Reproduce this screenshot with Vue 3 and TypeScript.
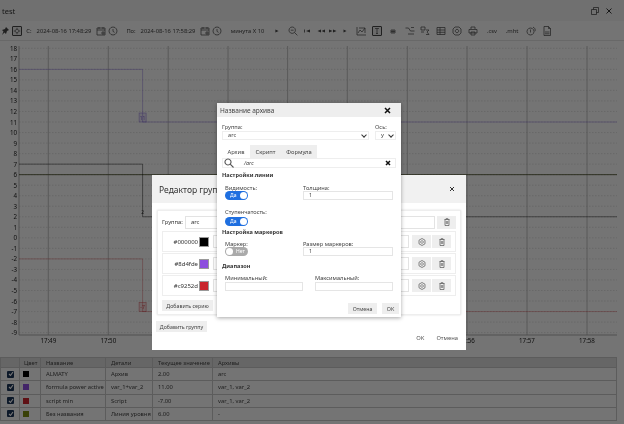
<script setup lang="ts">
interface Tool { w: number; text?: string; d?: string; fill?: boolean; boxed?: boolean }

const tools: Tool[] = [
  { w: 10, d: 'M6 1l3 3-2 1-1 3-1.500-1.500L2 9 3.500 5.500 2 4l3-1z', fill: true },
  { w: 14, d: 'M4 2.200a1.800 1.800 0 1 0 .01 0M4 .8v1M4 6.200v1M.8 4h1M6.200 4h1', boxed: true },
  { w: 10, text: 'С:' },
  { w: 60, text: '2024-08-16 17:48:29' },
  { w: 14, d: 'M1 2h8v7H1zM1 4h8M3 1v2M7 1v2M6 6h2v2H6z' },
  { w: 10, d: 'M5 1a4 4 0 1 0 .01 0M5 3v2.400l1.600 1' },
  { w: 6 },
  { w: 14, text: 'По:' },
  { w: 60, text: '2024-08-16 17:58:29' },
  { w: 14, d: 'M1 2h8v7H1zM1 4h8M3 1v2M7 1v2M6 6h2v2H6z' },
  { w: 10, d: 'M5 1a4 4 0 1 0 .01 0M5 3v2.400l1.600 1' },
  { w: 51, text: 'минута X 10' },
  { w: 8, d: 'M3 3l4 2-4 2z', fill: true },
  { w: 6 },
  { w: 12, d: 'M4.200 1a3.200 3.200 0 1 0 .01 0M6.600 6.600L9.400 9.400M2.800 4.200h2.800' },
  { w: 16, d: 'M2 3.500h.8v3H2zM8 3.500L4 5l4 1.500z', fill: true },
  { w: 12, d: 'M5 3.500L1.500 5 5 6.500zM9 3.500L5.500 5 9 6.500z', fill: true },
  { w: 12, d: 'M1 3.500L4.500 5 1 6.500zM5 3.500L8.500 5 5 6.500z', fill: true },
  { w: 12, d: 'M3.500 3.500L6.500 5l-3 1.500z', fill: true },
  { w: 20, d: 'M1 1v8h9M2 7l2-3 2 2 3-4M3 2h6v5' },
  { w: 12, d: 'M2 1.500h4M4 1.500v5M3 6.500h2', boxed: true },
  { w: 20, d: 'M3 4h4v3H3zM3 5.500h4M5 4v3' },
  { w: 14, d: 'M0.500 2h3l2 3h4M3 8h6M6 1.500h3' },
  { w: 16, d: 'M1 1h4v3H1zM6 4h3L7 6l2 2.500H6M1 6h3' },
  { w: 16, d: 'M1 1.500h8v7H1zM1 4h8M1 6.300h8M4 1.500v7' },
  { w: 16, d: 'M3 1h4l2 2v4L7 9H3L1 7V3zM5 3.300a1.700 1.700 0 1 0 .01 0' },
  { w: 16, d: 'M3 3V1h4v2M1 3.500h8v3.500H1zM3 6h4v3H3z' },
  { w: 22, text: '.csv' },
  { w: 18, text: '.mht' },
  { w: 20, d: 'M4.500 2a3.500 3.500 0 1 0 .01 0M7 1.200a3 3 0 0 1 2 4M4.500 3.500v3' },
  { w: 12, d: 'M2 .5h4.500L8.500 2.500v7H2zM6.500 .5v2h2M3 6h4.500M3 7.800h4.500' },
]

// chart geometry: value to pixel
const yOf = (v: number) => 48.3 + (18 - v) * 10.53
const values = Array.from({ length: 28 }, (_, i) => 18 - i)
const majors = [
  { x: 48.3, t: '17:49' }, { x: 108.3, t: '17:50' }, { x: 168.2, t: '17:51' }, { x: 228, t: '17:52' },
  { x: 287.6, t: '17:53' }, { x: 347.3, t: '17:54' }, { x: 407.3, t: '17:55' }, { x: 467, t: '17:56' },
  { x: 527, t: '17:57' }, { x: 587, t: '17:58' },
]
const stepX = 142.6
const series = [
  { color: '#6d4bd0', from: 16, to: 11, label: '11', box: true, alpha: 0.45 },
  { color: '#000000', from: 7, to: 2, label: '2', box: false, alpha: 0.55 },
  { color: '#c9252d', from: -2, to: -7, label: '-7', box: true, alpha: 0.4 },
]
const stepPath = (a: number, b: number) => `M19 ${yOf(a)}H${stepX}V${yOf(b)}H617`

const rows = [
  { color: '#000000', name: 'ALMATY', details: 'Архив', value: '2.00', archives: 'arc' },
  { color: '#8d4fde', name: 'formula power active', details: 'var_1+var_2', value: '11.00', archives: 'var_1, var_2' },
  { color: '#c9252d', name: 'script min', details: 'Script', value: '-7.00', archives: 'var_1, var_2' },
  { color: '#7a8a10', name: 'Без названия', details: 'Линия уровня', value: '6.00', archives: '-' },
]
const groupSeries = [
  { hex: '#000000', color: '#000000' },
  { hex: '#8d4fde', color: '#8d4fde' },
  { hex: '#c9252d', color: '#c9252d' },
]
</script>

<template>
  <div class="app">
    <header class="titlebar">
      <span>test</span>
      <span class="win-btns">
        <svg width="8" height="8" viewBox="0 0 8 8"><path d="M0.500 2.500h5v5h-5zM2.500 2.500v-2h5v5h-2" /></svg>
        <svg width="8" height="8" viewBox="0 0 8 8"><path d="M1.500 1.500l5 5M6.500 1.500l-5 5" class="thick" /></svg>
      </span>
    </header>

    <div class="toolbar">
      <span v-for="(tool, i) in tools" :key="i" class="tool" :style="{ width: tool.w + 'px' }">
        <template v-if="tool.text">{{ tool.text }}</template>
        <span v-else-if="tool.boxed" class="boxed">
          <svg width="8" height="8" viewBox="0 0 8 8"><path :d="tool.d" /></svg>
        </span>
        <svg v-else-if="tool.d" width="10" height="10" viewBox="0 0 10 10"><path :d="tool.d" :class="{ solid: tool.fill }" /></svg>
      </span>
    </div>

    <svg class="chart" width="624" height="316" viewBox="0 41 624 316">
      <line v-for="v in values" :key="v" x1="19" x2="617" :y1="yOf(v)" :y2="yOf(v)" class="minor" />
      <line v-for="m in majors" :key="m.t" :x1="m.x" :x2="m.x" y1="46" y2="335" class="major" />
      <line x1="19" x2="19" y1="46" y2="335" class="axis" />
      <line x1="19" x2="617" y1="335" y2="335" class="axis" />
      <text v-for="v in values" :key="'l' + v" x="17" :y="yOf(v) + 2.500" text-anchor="end" class="tick">{{ v }}</text>
      <text v-for="m in majors" :key="'t' + m.t" :x="m.x" y="342.500" text-anchor="middle" class="tick">{{ m.t }}</text>
      <line x1="19" x2="617" :y1="yOf(6)" :y2="yOf(6)" stroke="#3f4520" stroke-width=".8" />
      <g v-for="s in series" :key="s.color">
        <path :d="stepPath(s.from, s.to)" class="trace" :style="{ stroke: s.color, strokeOpacity: s.alpha }" />
        <rect v-if="s.box" :x="stepX - 3.500" :y="yOf(s.to) - 9" width="7" height="9" :fill="s.color" fill-opacity=".12" :stroke="s.color" stroke-width=".6" stroke-opacity=".6" />
        <text :x="stepX" :y="yOf(s.to) - 2.500" text-anchor="middle" class="mark" :fill="s.color">{{ s.label }}</text>
      </g>
    </svg>

    <table class="legend">
      <thead>
        <tr><th class="c0"></th><th class="c1">Цвет</th><th class="c2">Название</th><th class="c3">Детали</th><th class="c4">Текущее значение</th><th>Архивы</th></tr>
      </thead>
      <tbody>
        <tr v-for="r in rows" :key="r.name">
          <td><span class="check">
            <svg width="6" height="6" viewBox="0 0 6 6"><path d="M1 3l1.500 1.500L5 1" class="white" /></svg>
          </span></td>
          <td><span class="dot" :style="{ background: r.color }"></span></td>
          <td>{{ r.name }}</td><td>{{ r.details }}</td><td>{{ r.value }}</td><td>{{ r.archives }}</td>
        </tr>
      </tbody>
    </table>

    <div class="backdrop"></div>

    <section class="editor">
      <div class="ed-head">
        <span>Редактор групп</span>
        <svg width="6" height="6" viewBox="0 0 6 6"><path d="M1 1l4 4M5 1L1 5" class="thick" /></svg>
      </div>
      <div class="ed-body">
        <div class="group">
          <div class="group-row">
            <span class="ed-label">Группа:</span>
            <span class="ed-input">arc</span>
            <button class="sq">
              <svg width="8" height="8" viewBox="0 0 8 8"><path d="M1.500 1.500h5M3 1.500V.7h2v.8M2 1.500v6h4v-6M3.300 3v3M4.700 3v3" /></svg>
            </button>
          </div>
          <div v-for="g in groupSeries" :key="g.hex" class="series">
            <span class="hex">{{ g.hex }}</span>
            <span class="swatch" :style="{ background: g.color }"></span>
            <span class="ed-input grow"></span>
            <button class="sq">
              <svg width="8" height="8" viewBox="0 0 8 8"><path d="M4 .5l3 1.700v3.600L4 7.500 1 5.800V2.200zM4 2.700a1.300 1.300 0 1 0 .01 0" /></svg>
            </button>
            <button class="sq">
              <svg width="8" height="8" viewBox="0 0 8 8"><path d="M1.500 1.500h5M3 1.500V.7h2v.8M2 1.500v6h4v-6M3.300 3v3M4.700 3v3" /></svg>
            </button>
          </div>
          <button class="flat add-series">Добавить серию</button>
        </div>
        <button class="flat add-group">Добавить группу</button>
      </div>
      <div class="ed-foot"><span>OK</span><span>Отмена</span></div>
    </section>

    <section class="archive">
      <div class="ar-head">
        <span>Название архива</span>
        <svg width="7" height="7" viewBox="0 0 7 7"><path d="M1 1l5 5M6 1L1 6" class="bold" /></svg>
      </div>
      <div class="ar-body">
        <div class="pick-row">
          <label class="field wide">Группа:
            <span class="select">arc<i class="chev"></i></span>
          </label>
          <label class="field axis-pick">Ось:
            <span class="select">y<i class="chev"></i></span>
          </label>
        </div>
        <div class="tabs">
          <span class="tab active">Архив</span><span class="tab">Скрипт</span><span class="tab">Формула</span>
        </div>
        <div class="search">
          <svg width="10" height="10" viewBox="0 0 10 10"><path d="M4 1a3 3 0 1 0 .01 0M6.200 6.200L9.500 9.500" class="mag" /></svg>
          <span class="query">/arc</span>
          <svg width="6" height="6" viewBox="0 0 6 6"><path d="M1 1l4 4M5 1L1 5" class="bold" /></svg>
        </div>

        <h4 class="first">Настройки линии</h4>
        <div class="set-row visible">
          <label class="field left">Видимость:
            <span class="toggle on">Да</span>
          </label>
          <label class="field right">Толщина:
            <span class="box">1</span>
          </label>
        </div>
        <div class="set-row step">
          <label class="field left">Ступенчатость:
            <span class="toggle on">Да</span>
          </label>
        </div>

        <h4 class="second">Настройка маркеров</h4>
        <div class="set-row marker">
          <label class="field left">Маркер:
            <span class="toggle off">Нет</span>
          </label>
          <label class="field right">Размер маркеров:
            <span class="box">1</span>
          </label>
        </div>

        <h4 class="third">Диапазон</h4>
        <div class="range-row">
          <label class="field">Минимальный:
            <span class="box"></span>
          </label>
          <label class="field">Максимальный:
            <span class="box"></span>
          </label>
        </div>

        <div class="ar-foot">
          <button class="flat cancel">Отмена</button>
          <button class="flat ok">OK</button>
        </div>
      </div>
    </section>
  </div>
</template>

<style>
html, body { margin: 0; background: #777; }
</style>

<style scoped>
.app { position: relative; width: 624px; height: 424px; overflow: hidden; background: #f6f6f6; color: #222; font-family: "Noto Sans", "Open Sans", sans-serif; font-size: 6px; filter: blur(.45px); }
svg path { fill: none; stroke: currentColor; stroke-width: .7; }
svg path.solid { fill: currentColor; stroke: none; }
svg path.thick { stroke-width: 1; }
svg path.bold { stroke-width: 1.500; stroke: #111; }
svg path.white { stroke: #fff; stroke-width: 1.100; }
svg path.mag { stroke: #555; stroke-width: 1.100; }
svg path.trace { stroke-width: .8; }

.titlebar { display: flex; justify-content: space-between; align-items: center; height: 21px; padding: 0 11px 0 2px; box-sizing: border-box; background: #ededed; font-size: 7.500px; color: #333; }
.win-btns { display: flex; gap: 6px; }
.toolbar { display: flex; align-items: center; height: 20px; box-sizing: border-box; border-bottom: 1px solid #ddd; font-size: 5.800px; color: #444; }
.tool { display: flex; flex: none; justify-content: center; align-items: center; white-space: nowrap; }
.boxed { display: flex; border: 1px solid #444; border-radius: 1px; background: #e3e3e3; }

.chart { display: block; }
.minor { stroke: #d2d2d2; stroke-width: .7; stroke-dasharray: 1.500 1.500; }
.major { stroke: #b0b0b0; stroke-width: .8; }
.axis { stroke: #999; stroke-width: .8; }
.tick { font-size: 6.200px; fill: #222; }
.mark { font-size: 5px; fill-opacity: .8; }

.legend { width: 617px; border-collapse: collapse; table-layout: fixed; color: #444; font-size: 5.800px; line-height: 8px; }
.legend th { box-sizing: border-box; height: 10px; padding: 0 0 0 5px; border: 1px solid #c4c4c4; background: #d9d9d9; font-weight: 400; text-align: left; white-space: nowrap; }
.legend td { box-sizing: border-box; height: 13.250px; padding: 0 0 0 5px; border: 1px solid #c4c4c4; white-space: nowrap; overflow: hidden; }
.c0 { width: 19px; } .c1 { width: 21px; } .c2 { width: 65px; } .c3 { width: 47px; } .c4 { width: 60px; }
.legend .c1 { padding-left: 4px; }
.check { display: flex; justify-content: center; align-items: center; width: 7px; height: 7px; margin-left: 1px; background: #1c3557; border-radius: 1px; }
.dot { display: block; width: 6px; height: 6px; margin-left: -2px; }

.backdrop { position: absolute; inset: 0; background: rgba(0, 0, 0, .53); }

.editor { position: absolute; left: 152px; top: 175px; width: 314px; height: 175px; background: #fff; color: #333; }
.ed-head { display: flex; justify-content: space-between; align-items: center; height: 28px; padding: 0 11px 0 7px; background: #f1f1f1; font-size: 8.500px; }
.ed-body { padding: 7px 5px 0 5px; }
.group { display: flex; flex-direction: column; height: 105px; box-sizing: border-box; padding: 3px 4px; border: 1px solid #eee; box-shadow: 0 0 2px #ddd; }
.group-row { display: flex; align-items: center; gap: 2px; height: 16px; }
.ed-label { font-size: 5.800px; }
.ed-input { display: flex; flex: 1; align-items: center; height: 13px; padding-left: 5px; box-sizing: border-box; border: 1px solid #e3e3e3; }
.sq { display: flex; justify-content: center; align-items: center; width: 19px; height: 13px; padding: 0; border: 0; background: #eee; color: #555; }
.series { display: flex; align-items: center; gap: 1px; height: 21px; padding: 0 4px 0 0; box-sizing: border-box; border: 1px solid #eee; margin-top: 1px; }
.hex { width: 35px; text-align: right; }
.swatch { width: 10px; height: 10px; box-sizing: border-box; margin-right: 3px; border: .5px solid #999; }
.grow { margin-right: 2px; }
.flat { height: 11px; padding: 0; border: 0; background: #eee; color: #444; font: inherit; font-size: 5.300px; white-space: nowrap; }
.add-series { width: 51px; align-self: flex-start; margin-top: 4px; }
.add-group { display: block; width: 51px; margin: 6px 0 0 -1px; }
.ed-foot { display: flex; justify-content: flex-end; gap: 12px; padding: 2px 8px 0 0; font-size: 5.800px; color: #555; }

.archive { position: absolute; left: 217px; top: 103px; width: 184px; height: 214px; background: #fff; color: #444; box-shadow: 0 1px 4px rgba(0, 0, 0, .35); }
.ar-head { display: flex; justify-content: space-between; align-items: center; height: 14px; padding: 0 10px 0 3px; background: #eee; font-size: 6.500px; }
.ar-body { padding: 7px 5px 0; }
.field { display: flex; flex-direction: column; font-size: 5.700px; line-height: 6px; }
.pick-row .field, .step .field { line-height: 7px; }
.pick-row { display: flex; gap: 6px; }
.wide { flex: 1; }
.axis-pick { width: 21px; }
.select { display: flex; justify-content: space-between; align-items: center; box-sizing: border-box; height: 9px; padding: 0 2px 0 5px; border: 1px solid #eee; }
.chev { width: 3px; height: 3px; margin-top: -2px; border-right: 1px solid #333; border-bottom: 1px solid #333; transform: rotate(45deg); }
.tabs { display: flex; height: 13px; margin-top: 5px; font-size: 5.800px; }
.tab { display: flex; justify-content: center; align-items: center; width: 31px; background: #eee; }
.tab.active { width: 28px; background: #fff; }
.tab:nth-child(3) { width: 36px; }
.search { display: flex; align-items: center; height: 10px; border: 1px solid #eee; box-sizing: border-box; padding: 0 4px 0 1px; }
.query { flex: 1; padding-left: 10px; font-size: 5.500px; font-style: italic; }
h4 { margin: 0; font-size: 5.600px; line-height: 8px; font-weight: 700; color: #333; }
h4.first { margin-top: 3px; }
h4.second { margin-top: 2.500px; }
h4.third { margin-top: 6px; }
.set-row { display: flex; margin-left: 3px; }
.set-row.visible { margin-top: 6px; }
.set-row.step { margin-top: 8.500px; }
.set-row.marker { margin-top: 5px; }
.step .toggle { margin-top: 1px; }
.left { width: 78px; }
.right { width: 90px; }
.box { display: block; height: 7px; padding-left: 5px; border: 1px solid #e5e5e5; font-size: 5.500px; line-height: 7px; }
.toggle { position: relative; display: block; box-sizing: border-box; width: 23px; height: 9px; border-radius: 5px; color: #fff; font-size: 5px; line-height: 9px; }
.toggle::after { content: ""; position: absolute; top: 1px; width: 7px; height: 7px; border-radius: 50%; background: #fff; }
.toggle.on { padding-left: 5px; background: #1f6fe0; }
.toggle.on::after { right: 1px; }
.toggle.off { padding-left: 11px; background: #aaa; }
.toggle.off::after { left: 1px; }
.range-row { display: grid; grid-template-columns: 78px 78px; gap: 12px; margin: 5px 0 0 3px; }
.range-row .box { margin-top: 1px; }
.ar-foot { display: flex; justify-content: flex-end; gap: 5px; margin: 12px -3px 0 0; }
.cancel { width: 29px; }
.ok { width: 17px; }
</style>
